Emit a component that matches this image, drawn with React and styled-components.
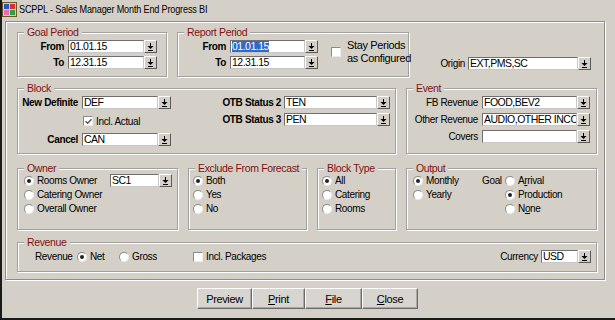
import React from 'react';
import styled, { createGlobalStyle } from 'styled-components';

const BG = '#d4d0c8';
const FONT = `"Liberation Sans", Arial, sans-serif`;

const Global = createGlobalStyle`
  html, body { margin: 0; padding: 0; background: ${BG}; }
  body { font-family: ${FONT}; font-size: 10px; letter-spacing: -0.35px; color: #000; }
  * { box-sizing: border-box; }
`;

const Window = styled.div`
  width: 615px;
  height: 320px;
  border-left: 2px solid #1a1a1a;
  border-bottom: 2px solid #1a1a1a;
  background: ${BG};
  display: flex;
  flex-direction: column;
  overflow: hidden;
`;

const TitleBar = styled.div`
  height: 21px;
  display: flex;
  align-items: center;
  gap: 2px;
  padding: 0 0 3px 0;
  color: #000;
`;

const TitleText = styled.span`
  font-size: 11.5px;
  letter-spacing: -0.2px;
  white-space: nowrap;
  display: inline-block;
  transform: scaleX(0.79);
  transform-origin: left center;
`;

const Body = styled.div`
  padding-left: 3px;
`;

const Panel = styled.div`
  width: 600px;
  height: 259px;
  border: 1px solid #8c8c8c;
  box-shadow: inset 1px 1px 0 #fff, 1px 1px 0 #fff;
  padding: 10px 0 0 11px;
  display: flex;
  flex-direction: column;
`;

const Row = styled.div`
  display: flex;
  gap: 10px;
  height: ${p => p.$h}px;
  margin-top: ${p => p.$mt || 0}px;
`;

const BoxWrap = styled.div`
  position: relative;
  width: ${p => p.$w}px;
  height: 100%;
  border: 1px solid #a0a0a0;
  box-shadow: inset 1px 1px 0 #fff, 1px 1px 0 #fff;
  padding: ${p => p.$pad || '0'};
`;

const Legend = styled.span`
  position: absolute;
  top: -7px;
  left: 6px;
  padding: 0 3px;
  background: ${BG};
  color: #7f1010;
  line-height: 12px;
  font-size: 10.5px;
  white-space: nowrap;
`;

const Box = ({ legend, w, pad, children }) => (
  <BoxWrap $w={w} $pad={pad}>
    <Legend>{legend}</Legend>
    {children}
  </BoxWrap>
);

const Col = styled.div`
  display: flex;
  flex-direction: column;
  gap: ${p => p.$gap || 0}px;
`;

const FieldLine = styled.div`
  display: flex;
  align-items: center;
  height: 13px;
`;

const Label = styled.span`
  width: ${p => p.$w}px;
  text-align: right;
  font-weight: ${p => (p.$bold ? 'bold' : 'normal')};
  margin-right: ${p => (p.$gap ?? 4)}px;
  white-space: nowrap;
  flex: none;
`;

const Input = styled.div`
  width: ${p => p.$w}px;
  height: 13px;
  background: #fff;
  border: 1px solid;
  border-color: #6f6f6f #c8c8c8 #c8c8c8 #6f6f6f;
  padding-left: 1px;
  line-height: 11px;
  font-size: 10.5px;
  letter-spacing: -0.5px;
  white-space: nowrap;
  overflow: hidden;
`;

const Selected = styled.span`
  background: #316ac5;
  color: #fff;
`;

const DropBtn = styled.div`
  width: 13px;
  height: 13px;
  background: ${BG};
  border: 1px solid;
  border-color: #fff #5a5a5a #5a5a5a #fff;
  display: flex;
  align-items: center;
  justify-content: center;
  flex: none;
`;

const DropIcon = () => (
  <svg width="7" height="8" viewBox="0 0 7 8">
    <rect x="3" y="0" width="1" height="3" fill="#000" />
    <polygon points="0.5,3 6.5,3 3.5,6" fill="#000" />
    <rect x="1" y="7" width="5" height="1" fill="#000" />
  </svg>
);

const Combo = ({ w, children }) => (
  <>
    <Input $w={w}>{children}</Input>
    <DropBtn><DropIcon /></DropBtn>
  </>
);

const Field = ({ label, lw, bold, iw, value, gap }) => (
  <FieldLine>
    <Label $w={lw} $bold={bold} $gap={gap}>{label}</Label>
    <Combo w={iw}>{value}</Combo>
  </FieldLine>
);

const RadioCircle = styled.span`
  width: 10px;
  height: 10px;
  border-radius: 50%;
  background: #fff;
  border: 1px solid;
  border-color: #8a8a8a #ececec #ececec #8a8a8a;
  position: relative;
  flex: none;
  &::after {
    content: '';
    display: ${p => (p.$on ? 'block' : 'none')};
    position: absolute;
    left: 2px;
    top: 2px;
    width: 4px;
    height: 4px;
    border-radius: 50%;
    background: #222;
  }
`;

const Option = styled.div`
  display: flex;
  align-items: center;
  height: 13px;
  gap: ${p => p.$gap ?? 3}px;
  width: ${p => (p.$w ? `${p.$w}px` : 'auto')};
  flex: none;
  white-space: nowrap;
`;

const Radio = ({ on, children, w }) => (
  <Option $w={w}>
    <RadioCircle $on={on} />
    <span>{children}</span>
  </Option>
);

const CheckBox = styled.span`
  width: 10px;
  height: 10px;
  background: #fff;
  border: 1px solid;
  border-color: #8a8a8a #ececec #ececec #8a8a8a;
  display: flex;
  align-items: center;
  justify-content: center;
  flex: none;
`;

const Check = ({ on, children, w }) => (
  <Option $w={w} $gap={3}>
    <CheckBox>
      {on && (
        <svg width="7" height="7" viewBox="0 0 7 7">
          <path d="M0.5 3.2 L2.6 5.3 L6.5 1.2" stroke="#555" strokeWidth="1.4" fill="none" />
        </svg>
      )}
    </CheckBox>
    <span>{children}</span>
  </Option>
);

const U = styled.span`
  text-decoration: underline;
`;

const Spread = styled.div`
  display: flex;
  justify-content: space-between;
  padding-right: ${p => p.$pr || 0}px;
`;

const StayWrap = styled.div`
  display: flex;
  align-items: center;
  gap: 6px;
  margin: -1px 0 0 13px;
  align-self: flex-start;
`;

const TwoLines = styled.div`
  line-height: 13px;
  font-size: 11px;
  white-space: nowrap;
`;

const Flex = styled.div`
  display: flex;
  align-items: flex-start;
`;

const OriginWrap = styled.div`
  display: flex;
  align-items: center;
  align-self: flex-end;
  margin: 0 0 7px -10px;
  height: 13px;
`;

const CheckIndent = styled.div`
  padding-left: ${p => p.$pl}px;
  height: 14px;
  display: flex;
  align-items: center;
`;

const OutputGrid = styled.div`
  display: grid;
  grid-template-columns: 69px 23px auto;
  grid-auto-rows: 13px;
  row-gap: 1px;
  align-items: center;
`;

const Plain = styled.span`
  white-space: nowrap;
`;

const RevenueLine = styled.div`
  display: flex;
  align-items: center;
  height: 13px;
  padding-right: 5px;
`;

const RevLabel = styled.span`
  width: 42px;
  flex: none;
`;

const Push = styled.div`
  margin-left: auto;
  display: flex;
  align-items: center;
`;

const ButtonBar = styled.div`
  display: flex;
  justify-content: center;
  margin-top: 8px;
  padding-right: 5px;
`;

const Button = styled.div`
  width: ${p => p.$w}px;
  height: 21px;
  background: #d8d5d0;
  border: 1px solid;
  border-color: #fff #6a6a6a #6a6a6a #fff;
  box-shadow: inset -1px -1px 0 #a8a8a8;
  display: flex;
  align-items: center;
  justify-content: center;
  font-size: 11px;
`;

const AppIcon = () => (
  <svg width="15" height="15" viewBox="0 0 15 15">
    <rect x="0.5" y="0.5" width="14" height="14" fill="#f4d23c" stroke="#6a5a20" />
    <rect x="2" y="2" width="5" height="5" fill="#2a56c6" />
    <rect x="8" y="2" width="5" height="5" fill="#d83030" />
    <rect x="2" y="8" width="5" height="5" fill="#e070b0" />
    <rect x="8" y="8" width="5" height="5" fill="#30a040" />
  </svg>
);

export default function App() {
  return (
    <>
      <Global />
      <Window>
        <TitleBar>
          <AppIcon />
          <TitleText>SCPPL - Sales Manager Month End Progress BI</TitleText>
        </TitleBar>
        <Body>
          <Panel>
            <Row $h={45}>
              <Box legend="Goal Period" w={150} pad="7px 0 0 0">
                <Col $gap={3}>
                  <Field label="From" lw={46} bold iw={76} value="01.01.15" />
                  <Field label="To" lw={46} bold iw={76} value="12.31.15" />
                </Col>
              </Box>
              <Box legend="Report Period" w={232} pad="7px 0 0 0">
                <Flex>
                  <Col $gap={3}>
                    <Field label="From" lw={48} bold iw={75} value={<Selected>01.01.15</Selected>} />
                    <Field label="To" lw={48} bold iw={75} value="12.31.15" />
                  </Col>
                  <StayWrap>
                    <CheckBox />
                    <TwoLines>Stay Periods<br />as Configured</TwoLines>
                  </StayWrap>
                </Flex>
              </Box>
              <OriginWrap>
                <Label $w={56} $gap={3}>Origin</Label>
                <Combo w={110}>EXT,PMS,SC</Combo>
              </OriginWrap>
            </Row>

            <Row $h={66} $mt={11}>
              <Box legend="Block" w={379} pad="7px 0 0 0">
                <Spread $pr={5}>
                  <Col $gap={5}>
                    <Field label="New Definite" lw={60} bold iw={76} value="DEF" />
                    <CheckIndent $pl={65}>
                      <Check on>Incl. Actual</Check>
                    </CheckIndent>
                    <Field label="Cancel" lw={60} bold iw={76} value="CAN" />
                  </Col>
                  <Col $gap={4}>
                    <Field label="OTB Status 2" lw={70} bold iw={93} value="TEN" gap={3} />
                    <Field label="OTB Status 3" lw={70} bold iw={93} value="PEN" gap={3} />
                  </Col>
                </Spread>
              </Box>
              <Box legend="Event" w={191} pad="7px 0 0 0">
                <Col $gap={4}>
                  <Field label="FB Revenue" lw={71} iw={95} value="FOOD,BEV2" />
                  <Field label="Other Revenue" lw={71} iw={95} value="AUDIO,OTHER INCOM" />
                  <Field label="Covers" lw={71} iw={95} value="" />
                </Col>
              </Box>
            </Row>

            <Row $h={62} $mt={14}>
              <Box legend="Owner" w={161} pad="5px 0 0 6px">
                <Col $gap={1}>
                  <FieldLine>
                    <Radio on w={86}>Rooms Owner</Radio>
                    <Combo w={49}>SC1</Combo>
                  </FieldLine>
                  <Radio>Catering Owner</Radio>
                  <Radio>Overall Owner</Radio>
                </Col>
              </Box>
              <Box legend="Exclude From Forecast" w={119} pad="5px 0 0 4px">
                <Col $gap={1}>
                  <Radio on>Both</Radio>
                  <Radio>Yes</Radio>
                  <Radio>No</Radio>
                </Col>
              </Box>
              <Box legend="Block Type" w={79} pad="5px 0 0 4px">
                <Col $gap={1}>
                  <Radio on>All</Radio>
                  <Radio>Catering</Radio>
                  <Radio>Rooms</Radio>
                </Col>
              </Box>
              <Box legend="Output" w={191} pad="5px 0 0 6px">
                <OutputGrid>
                  <Radio on>Monthly</Radio>
                  <Plain>Goal</Plain>
                  <Radio>A<U>r</U>rival</Radio>
                  <Radio>Yearly</Radio>
                  <span />
                  <Radio on>Production</Radio>
                  <span />
                  <span />
                  <Radio>N<U>o</U>ne</Radio>
                </OutputGrid>
              </Box>
            </Row>

            <Row $h={30} $mt={12}>
              <Box legend="Revenue" w={580} pad="7px 0 0 17px">
                <RevenueLine>
                  <RevLabel>Revenue</RevLabel>
                  <Radio on w={42}>Net</Radio>
                  <Radio w={74}>Gross</Radio>
                  <Check>Incl. Packages</Check>
                  <Push>
                    <Label $w={40} $gap={3}>Currency</Label>
                    <Combo w={37}>USD</Combo>
                  </Push>
                </RevenueLine>
              </Box>
            </Row>
          </Panel>
          <ButtonBar>
            <Button $w={55}>Preview</Button>
            <Button $w={53}><U>P</U>rint</Button>
            <Button $w={57}><U>F</U>ile</Button>
            <Button $w={56}><U>C</U>lose</Button>
          </ButtonBar>
        </Body>
      </Window>
    </>
  );
}
